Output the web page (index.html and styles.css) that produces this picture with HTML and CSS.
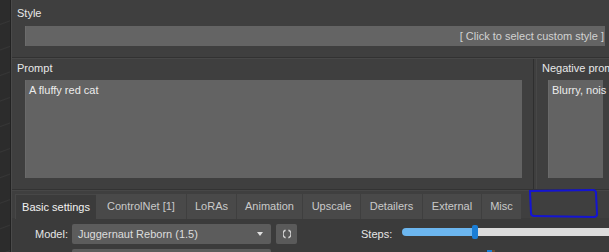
FILE: index.html
```html
<!DOCTYPE html>
<html>
<head>
  <title>Generate - Prompt</title>
  <meta name="viewport" content="width=device-width, initial-scale=1.0">
  <link rel="stylesheet" href="styles.css">
</head>
<body>

  <div class="canvas-edge"></div>

  <div class="panel">

    <!-- Style -->
    <div class="style-group">
      <div class="group-title">Style</div>
      <div class="style-picker">[ Click to select custom style ]</div>
    </div>

    <!-- Prompts -->
    <div class="prompt-row">
      <div class="prompt-group">
        <div class="group-title">Prompt</div>
        <div class="text-box">A fluffy red cat</div>
      </div>
      <div class="negative-group">
        <div class="group-title">Negative prom</div>
        <div class="text-box">Blurry, nois</div>
      </div>
    </div>

    <!-- Settings tabs -->
    <div class="settings">
      <div class="tab-bar">
        <div class="tab active">Basic settings</div>
        <div class="tab">ControlNet [1]</div>
        <div class="tab">LoRAs</div>
        <div class="tab">Animation</div>
        <div class="tab">Upscale</div>
        <div class="tab">Detailers</div>
        <div class="tab">External</div>
        <div class="tab">Misc</div>
      </div>

      <div class="tab-page">
        <div class="form-row">
          <label class="field-label">Model:</label>
          <div class="combo">
            <span>Juggernaut Reborn (1.5)</span>
            <span class="combo-arrow"></span>
          </div>
          <button class="icon-btn" title="Refresh">
            <svg width="8" height="10" viewBox="0 0 8 10">
              <path d="M2.6 1.3 A3.4 3.8 0 0 0 2.6 8.7" fill="none" stroke="#d0d0d0" stroke-width="1.4"/>
              <path d="M5.4 1.3 A3.4 3.8 0 0 1 5.4 8.7" fill="none" stroke="#d0d0d0" stroke-width="1.4"/>
            </svg>
          </button>
          <label class="field-label steps-label">Steps:</label>
          <div class="slider">
            <div class="slider-fill" style="width: 70px"></div>
            <div class="slider-handle"></div>
            <div class="slider-rest"></div>
          </div>
        </div>

        <!-- next row, only its top edge shows -->
        <div class="form-row">
          <div class="field-label"></div>
          <div class="combo"></div>
          <div class="row-handle"></div>
        </div>
      </div>
    </div>

    <!-- hand drawn marker -->
    <svg class="marker" width="74" height="34" viewBox="0 0 74 34">
      <path d="M3 4 L66 3 Q69 3 69 6 L70 27 Q70 30 67 30 L7 29 Q4 29 4 26 Z" fill="none" stroke="#1414d2" stroke-width="2"/>
    </svg>

  </div>

</body>
</html>
```

FILE: styles.css
```css
body {
  margin: 0;
  height: 252px;
  display: flex;
  overflow: hidden;
  background: #2b2b2b;
  font-family: "Liberation Sans", Arial, sans-serif;
  font-size: 11px;
  color: #e6e6e6;
}

.canvas-edge {
  width: 10px;
  flex-shrink: 0;
  border-right: 1px solid #222;
  background: repeating-linear-gradient(160deg, #2c2c2c 0, #2c2c2c 22px, #363636 23px, #2c2c2c 24px);
}

.panel {
  flex: 1;
  min-width: 0;
  position: relative;
  overflow: hidden;
  border-left: 1px solid #4a4a4a;
  background: #3f3f3f;
}

.group-title {
  height: 14px;
  line-height: 14px;
  padding-left: 5px;
  white-space: nowrap;
  color: #e8e8e8;
}

/* style */
.style-group {
  padding: 6px 0 11px;
  border-bottom: 1px solid #323232;
}

.style-picker {
  height: 20px;
  line-height: 20px;
  margin: 6px 4px 0 13px;
  padding-right: 1px;
  text-align: right;
  background: #646464;
  border-left: 1px solid #6c6c6c;
  color: #d2d2d2;
  white-space: nowrap;
}

/* prompts */
.prompt-row {
  display: flex;
  border-top: 1px solid #484848;
  border-bottom: 1px solid #333;
}

.prompt-group {
  width: 521px;
  flex-shrink: 0;
  padding: 2px 0 11px;
  border-right: 1px solid #2f2f2f;
}

.negative-group {
  width: 66px;
  flex-shrink: 0;
  padding: 2px 0 11px;
  border-left: 1px solid #474747;
  margin-left: 2px;
}

.prompt-group .text-box {
  margin-left: 13px;
  width: 489px;
}

.negative-group .text-box {
  margin-left: 11px;
}

.text-box {
  height: 90px;
  margin-top: 5px;
  padding: 4px 4px 4px 3px;
  background: #636363;
  border-left: 1px solid #6a6a6a;
  color: #ececec;
  white-space: nowrap;
}

/* tabs */
.settings {
  padding-top: 3px;
  border-top: 1px solid #474747;
}

.tab-bar {
  display: grid;
  grid-template-columns: 81px 90px 50px 66px 58px 62px 59px 40px;
  height: 24px;
  margin-left: 3px;
}

.tab {
  line-height: 24px;
  text-align: center;
  white-space: nowrap;
  background: #494949;
  color: #cacaca;
  border-left: 1px solid #3f3f3f;
}

.tab.active {
  background: #3b3b3b;
  color: #f2f2f2;
  border-left: 1px solid #474747;
  border-top: 1px solid #474747;
}

.tab.active + .tab {
  border-left: none;
}

.tab-page {
  background: #3b3b3b;
  padding-top: 6px;
  height: 40px;
}

.form-row {
  display: flex;
  align-items: center;
  height: 20px;
  margin-bottom: 5px;
}

.field-label {
  width: 56px;
  text-align: right;
  color: #e6e6e6;
  flex-shrink: 0;
}

.combo {
  width: 193px;
  height: 20px;
  margin-left: 4px;
  padding-left: 6px;
  display: flex;
  align-items: center;
  justify-content: space-between;
  background: #5c5c5c;
  color: #dcdcdc;
  border-radius: 2px;
  flex-shrink: 0;
}

.combo-arrow {
  width: 0;
  height: 0;
  margin-right: 8px;
  border-left: 3px solid transparent;
  border-right: 3px solid transparent;
  border-top: 4px solid #e0e0e0;
}

.icon-btn {
  width: 21px;
  height: 20px;
  margin-left: 5px;
  padding: 0;
  border: none;
  border-radius: 2px;
  background: #5a5a5a;
  display: flex;
  align-items: center;
  justify-content: center;
  cursor: pointer;
  flex-shrink: 0;
}

.steps-label {
  width: auto;
  margin-left: 64px;
}

.slider {
  display: flex;
  align-items: center;
  height: 14px;
  margin: 0 0 4px 10px;
  flex-shrink: 0;
}

.slider-fill {
  height: 8px;
  background: #6cb6ef;
  border-radius: 4px 0 0 4px;
}

.slider-handle {
  width: 6px;
  height: 14px;
  background: #1b7ed6;
  border-radius: 2px;
}

.slider-rest {
  width: 150px;
  height: 8px;
  background: #dcdcdc;
}

.row-handle {
  align-self: flex-start;
  width: 5px;
  height: 14px;
  margin: 1px 0 0 216px;
  background: #1b7ed6;
  box-shadow: 3px 0 0 #6a4a30;
}

.marker {
  position: absolute;
  left: 515px;
  top: 187px;
}
```
